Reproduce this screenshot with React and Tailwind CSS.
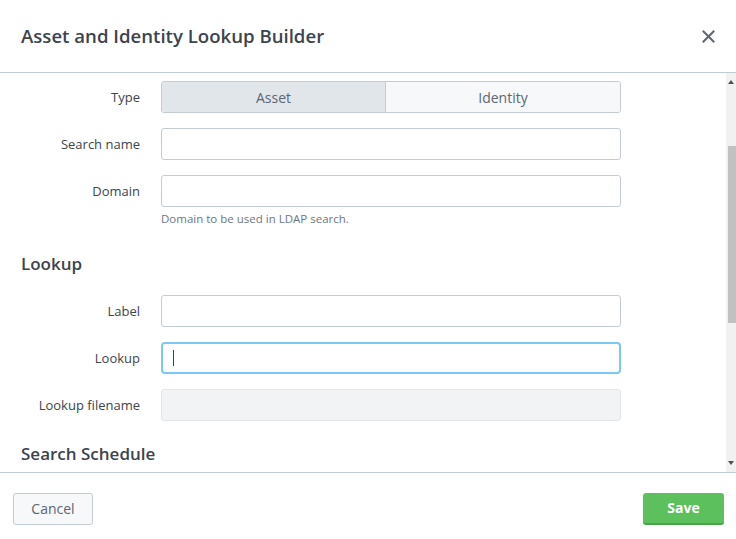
import React from 'react';

const font = { fontFamily: '"Open Sans", "Liberation Sans", sans-serif' };

function Row({ label, children, className = '' }) {
  return (
    <div className={`flex items-start ${className}`}>
      <label className="w-[140px] shrink-0 text-right text-[13px] leading-[32px] text-[#3c444d]">{label}</label>
      <div className="ml-[21px] w-[460px]">{children}</div>
    </div>
  );
}

function TextInput({ disabled = false, focused = false }) {
  if (focused) {
    return (
      <div className="h-[32px] rounded-[4px] border-2 border-[#7cc8f4] bg-white flex items-center pl-[10px]">
        <span className="block w-px h-[16px] bg-[#3c444d]" />
      </div>
    );
  }
  return (
    <div
      className={`h-[32px] rounded-[3px] border ${
        disabled ? 'border-[#e1e6eb] bg-[#f2f3f5]' : 'border-[#c3cbd4] bg-white'
      }`}
    />
  );
}

export default function App() {
  return (
    <div className="w-[736px] h-[539px] bg-white flex flex-col overflow-hidden" style={font}>
      {/* Header */}
      <div className="h-[73px] shrink-0 border-b border-[#c3cbd4] flex items-center justify-between pl-[21px] pr-[21px]">
        <h2 className="text-[18.6px] font-semibold text-[#3c444d]">Asset and Identity Lookup Builder</h2>
        <button className="w-[14px] h-[14px] flex items-center justify-center text-[#5c6773]">
          <svg width="13" height="13" viewBox="0 0 13 13" fill="none" stroke="currentColor" strokeWidth="2" strokeLinecap="square">
            <path d="M1.5 1.5 L11.5 11.5 M11.5 1.5 L1.5 11.5" />
          </svg>
        </button>
      </div>

      {/* Body */}
      <div className="flex-1 flex overflow-hidden">
        <div className="flex-1 overflow-hidden pt-[8px]">
          <Row label="Type">
            <div className="flex h-[32px] rounded-[3px] border border-[#c3cbd4] overflow-hidden text-[14px] text-[#5c6773]">
              <div className="w-[224px] bg-[#e1e6eb] border-r border-[#c3cbd4] flex items-center justify-center">Asset</div>
              <div className="flex-1 bg-[#f7f8fa] flex items-center justify-center">Identity</div>
            </div>
          </Row>
          <Row label="Search name" className="mt-[15px]">
            <TextInput />
          </Row>
          <Row label="Domain" className="mt-[15px]">
            <TextInput />
            <p className="mt-[4px] text-[11.5px] leading-[15px] text-[#6b7785]">Domain to be used in LDAP search.</p>
          </Row>

          <h3 className="mt-[27px] ml-[21px] text-[17px] font-semibold text-[#3c444d] leading-[22px]">Lookup</h3>

          <Row label="Label" className="mt-[20px]">
            <TextInput />
          </Row>
          <Row label="Lookup" className="mt-[15px]">
            <TextInput focused />
          </Row>
          <Row label="Lookup filename" className="mt-[15px]">
            <TextInput disabled />
          </Row>

          <h3 className="mt-[22px] ml-[21px] text-[17px] font-semibold text-[#3c444d] leading-[22px]">Search Schedule</h3>
        </div>

        {/* Scrollbar */}
        <div className="w-[10px] shrink-0 bg-[#f1f1f1] flex flex-col items-end">
          <div className="h-[18px] w-full flex items-center justify-center">
            <svg width="6" height="4" viewBox="0 0 6 4"><path d="M0 4 L3 0 L6 4 Z" fill="#505050" /></svg>
          </div>
          <div className="mt-[55px] h-[177px] w-[8px] bg-[#c1c1c1]" />
          <div className="flex-1" />
          <div className="h-[18px] w-full flex items-center justify-center">
            <svg width="6" height="4" viewBox="0 0 6 4"><path d="M0 0 L6 0 L3 4 Z" fill="#505050" /></svg>
          </div>
        </div>
      </div>

      {/* Footer */}
      <div className="h-[67px] shrink-0 border-t border-[#c3cbd4] flex items-center justify-between pl-[13px] pr-[12px] pt-[5px]">
        <button className="w-[80px] h-[32px] rounded-[3px] border border-[#c3cbd4] bg-[#f7f8fa] text-[14px] text-[#5c6773]">Cancel</button>
        <button className="w-[81px] h-[32px] rounded-[3px] bg-[#5cc05c] border-b-2 border-[#4aa34a] text-[14px] font-bold text-white">Save</button>
      </div>
    </div>
  );
}
